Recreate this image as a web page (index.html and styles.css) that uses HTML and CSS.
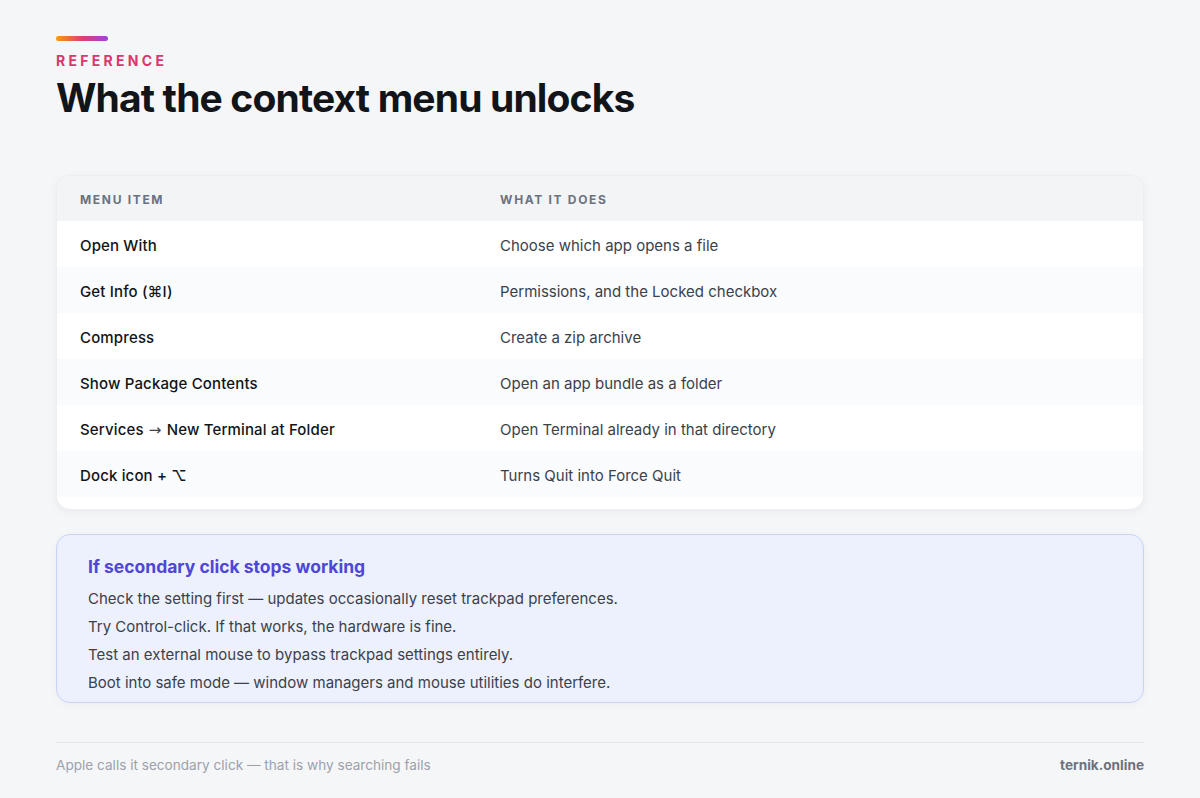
FILE: index.html
```html
<!DOCTYPE html>
<html lang="en">
<head>
<meta charset="utf-8">
<link rel="stylesheet" href="styles.css">
</head>
<body>
<main class="page">
  <header class="head">
    <div class="accent"></div>
    <div class="eyebrow">REFERENCE</div>
    <h1 class="title">What the context menu unlocks</h1>
  </header>

  <section class="card">
    <div class="row row-head">
      <div class="c1">MENU ITEM</div>
      <div class="c2">WHAT IT DOES</div>
    </div>
    <div class="row">
      <div class="c1">Open With</div>
      <div class="c2">Choose which app opens a file</div>
    </div>
    <div class="row alt">
      <div class="c1">Get Info (⌘I)</div>
      <div class="c2">Permissions, and the Locked checkbox</div>
    </div>
    <div class="row">
      <div class="c1">Compress</div>
      <div class="c2">Create a zip archive</div>
    </div>
    <div class="row alt">
      <div class="c1">Show Package Contents</div>
      <div class="c2">Open an app bundle as a folder</div>
    </div>
    <div class="row">
      <div class="c1">Services <span class="arrow">→</span> New Terminal at Folder</div>
      <div class="c2">Open Terminal already in that directory</div>
    </div>
    <div class="row alt">
      <div class="c1">Dock icon + ⌥</div>
      <div class="c2">Turns Quit into Force Quit</div>
    </div>
  </section>

  <section class="callout">
    <h2 class="callout-title">If secondary click stops working</h2>
    <p>Check the setting first — updates occasionally reset trackpad preferences.</p>
    <p>Try Control-click. If that works, the hardware is fine.</p>
    <p>Test an external mouse to bypass trackpad settings entirely.</p>
    <p>Boot into safe mode — window managers and mouse utilities do interfere.</p>
  </section>

  <footer class="foot">
    <span class="note">Apple calls it secondary click — that is why searching fails</span>
    <span class="brand">ternik.online</span>
  </footer>
</main>
</body>
</html>
```

FILE: styles.css
```css
* { box-sizing: border-box; }
html, body { margin: 0; padding: 0; }
body {
  background: #f5f6f8;
  font-family: Inter, "Liberation Sans", sans-serif;
  color: #111418;
  width: 1200px;
  height: 798px;
  overflow: hidden;
}
.page {
  padding: 36px 56px 0 56px;
  display: flex;
  flex-direction: column;
}
.head { display: flex; flex-direction: column; }
.accent {
  width: 52px;
  height: 5px;
  border-radius: 3px;
  background: linear-gradient(90deg, #f59e0b 0%, #e23d72 50%, #9b45e0 100%);
}
.eyebrow {
  margin-top: 11px;
  font-size: 14px;
  font-weight: 700;
  letter-spacing: 0.235em;
  color: #d9376e;
  line-height: 17px;
}
.title {
  margin: 6px 0 0 0;
  font-size: 39px;
  line-height: 46px;
  font-weight: 700;
  letter-spacing: -0.022em;
  color: #111418;
}
.card {
  margin-top: 54px;
  background: #ffffff;
  border: 1px solid #eceef1;
  border-radius: 14px;
  overflow: hidden;
  padding-bottom: 12px;
  box-shadow: 0 2px 8px rgba(17, 24, 39, 0.05);
}
.row {
  display: flex;
  height: 46px;
  align-items: center;
  font-size: 15px;
  padding-top: 2px;
}
.row.alt { background: #fafbfc; }
.c1 {
  width: 443px;
  padding-left: 23px;
  font-weight: 500;
  color: #111418;
  letter-spacing: 0.01em;
}
.arrow {
  font-family: "DejaVu Sans", sans-serif;
  font-weight: 400;
  font-size: 15px;
  margin: 0 1px;
  color: #3b414b;
}
.c2 {
  flex: 1;
  color: #3b414b;
}
.row-head {
  background: #f3f4f6;
  height: 45px;
  padding-top: 1px;
}
.row-head .c1, .row-head .c2 {
  font-size: 12px;
  font-weight: 700;
  letter-spacing: 0.14em;
  color: #6b7280;
}
.callout {
  margin-top: 24px;
  background: #edf1fd;
  border: 1.5px solid #c9d3f7;
  border-radius: 14px;
  padding: 20px 31px 5px 31px;
  box-shadow: 0 2px 8px rgba(17, 24, 39, 0.04);
}
.callout-title {
  margin: 0 0 6px 0;
  font-size: 17.5px;
  line-height: 24px;
  font-weight: 700;
  color: #4f46d8;
}
.callout p {
  margin: 0;
  font-size: 15px;
  line-height: 28px;
  color: #3b414b;
}
.foot {
  margin-top: 39px;
  border-top: 1px solid #e4e6ea;
  padding-top: 14px;
  display: flex;
  justify-content: space-between;
  align-items: baseline;
  font-size: 13.6px;
}
.note { color: #9ca1ab; }
.brand { color: #6b7280; font-weight: 700; }
```
